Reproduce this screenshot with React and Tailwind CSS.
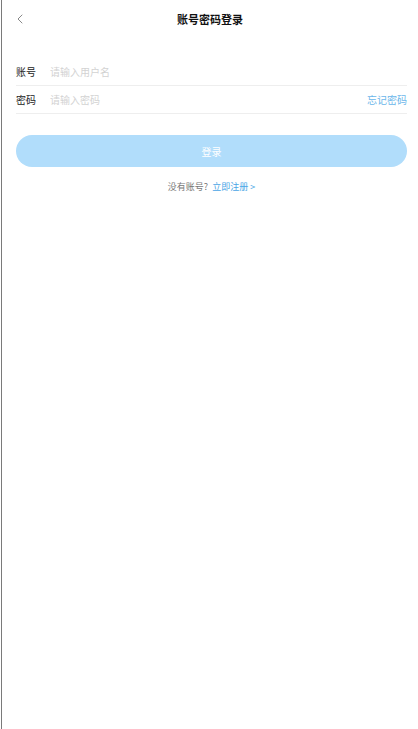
import { ChevronLeft } from "lucide-react";

const font = { fontFamily: '"Noto Sans CJK SC", "Noto Sans", sans-serif' };

function FormRow({ label, placeholder, type = "text", extra }) {
  return (
    <div className="flex items-center h-[28px] border-b border-[#eeeeee]">
      <span className="w-[34px] text-[10px] text-[#222]">{label}</span>
      <input
        type={type}
        placeholder={placeholder}
        className="flex-1 min-w-0 bg-transparent text-[10px] text-[#333] placeholder-[#d2d2d2] outline-none"
      />
      {extra}
    </div>
  );
}

export default function App() {
  return (
    <div className="bg-white pl-px">
      <div className="min-h-[729px] bg-white border-l border-[#7a7a7a]" style={font}>
        <div className="relative flex items-center justify-center h-[38px]">
          <button className="absolute left-[10px] top-[11px] text-[#888]">
            <ChevronLeft className="w-[16px] h-[16px]" strokeWidth={1.5} />
          </button>
          <h1 className="text-[11px] font-bold text-[#111]">账号密码登录</h1>
        </div>

        <div className="pl-[14px] pr-[11px] pt-[20px]">
          <FormRow label="账号" placeholder="请输入用户名" />
          <FormRow
            label="密码"
            placeholder="请输入密码"
            type="password"
            extra={<span className="text-[10px] text-[#6ab6ea]">忘记密码</span>}
          />

          <button className="mt-[21px] w-full h-[32px] rounded-full bg-[#b1ddfb] text-white text-[10px]">
            登录
          </button>

          <p className="mt-[13px] text-center text-[9px] text-[#777]">
            没有账号?<span className="ml-[4px] text-[#4aa6e6]">立即注册 &gt;</span>
          </p>
        </div>
      </div>
    </div>
  );
}
